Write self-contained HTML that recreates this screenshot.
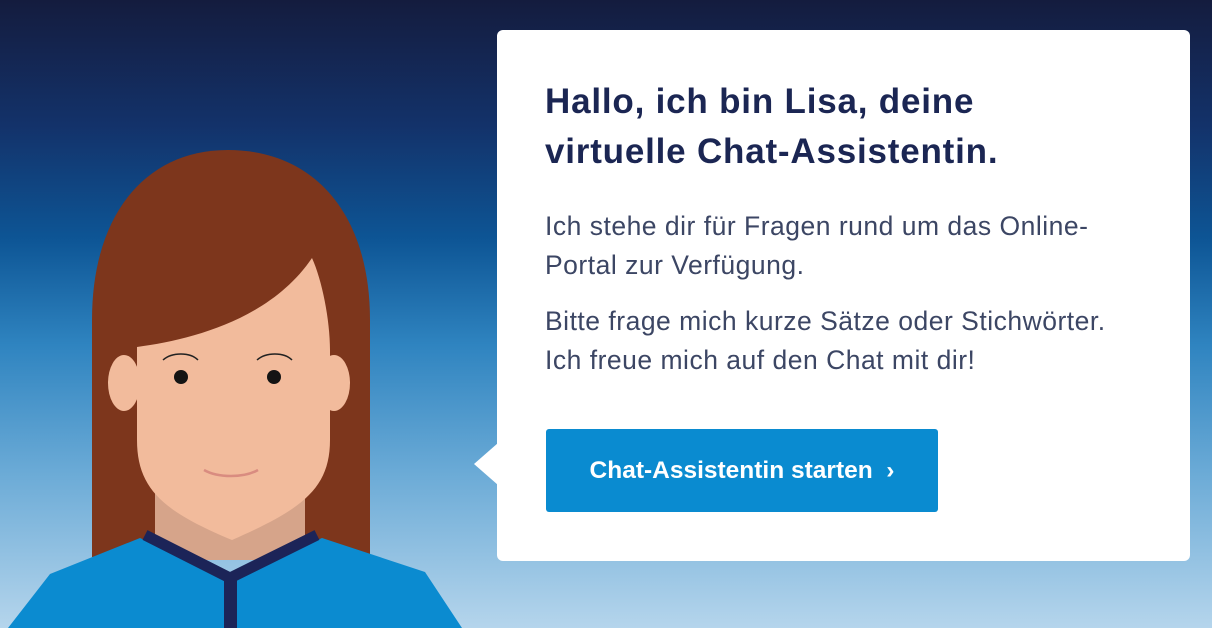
<!DOCTYPE html>
<html><head><meta charset="utf-8"><style>
html,body{margin:0;padding:0}
body{width:1212px;height:628px;overflow:hidden;position:relative;font-family:"Liberation Sans",sans-serif;
background:linear-gradient(180deg,#141c3e 0%,#13326a 20%,#0d5595 38%,#2f84c0 55%,#6aaad6 75%,#b5d5ec 100%);}
svg.p{position:absolute;left:0;top:0}
.card{position:absolute;left:497px;top:30px;width:693px;height:531px;background:#fff;border-radius:6px}
.ptr{position:absolute;left:474px;top:443px;width:0;height:0;border-top:21px solid transparent;border-bottom:21px solid transparent;border-right:24px solid #fff}
h1{position:absolute;left:545px;top:77px;margin:0;font-size:35px;letter-spacing:0.8px;line-height:50px;font-weight:bold;color:#1b2653;white-space:nowrap}
.t{position:absolute;left:545px;margin:0;font-size:26.5px;letter-spacing:0.5px;line-height:39px;color:#3c4664;white-space:nowrap}
.btn{position:absolute;left:546px;top:429px;width:392px;height:83px;background:#0a8bd0;border-radius:3px;color:#fff;font-weight:bold;font-size:24.5px;line-height:83px;text-align:center}
</style></head><body>
<svg class="p" width="1212" height="628" viewBox="0 0 1212 628">
<path d="M92,557 L92,320 C92,215 145,150 228,150 C315,150 370,215 370,320 L370,557 Z" fill="#7d361c"/>
<ellipse cx="124" cy="383" rx="16" ry="28" fill="#f2bb9c"/>
<ellipse cx="334" cy="383" rx="16" ry="28" fill="#f2bb9c"/>
<path d="M155,460 L305,460 L305,560 L155,560 Z" fill="#d6a48a"/>
<path d="M137,347 C190,340 270,320 312,258 C322,280 330,320 330,350 L330,440 C330,490 300,510 232,540 C165,512 137,490 137,440 Z" fill="#f2bb9c"/>
<path d="M163,360 C172,352 190,352 198,360" stroke="#222" stroke-width="1.5" fill="none"/>
<path d="M257,360 C266,352 284,352 292,360" stroke="#222" stroke-width="1.5" fill="none"/>
<circle cx="181" cy="377" r="7" fill="#141414"/>
<circle cx="274" cy="377" r="7" fill="#141414"/>
<path d="M204,470 C218,478 244,478 258,470" stroke="#d98c80" stroke-width="2.5" fill="none"/>
<path d="M140,538 L230,578 L322,538 L425,572 L462,628 L8,628 L50,574 Z" fill="#0b8bd0"/>
<path d="M145,535 L230,578 L317,535" stroke="#1c2458" stroke-width="11" fill="none"/>
<rect x="224" y="578" width="13" height="50" fill="#1c2458"/>
</svg>
<div class="ptr"></div>
<div class="card"></div>
<h1>Hallo, ich bin Lisa, deine<br>virtuelle Chat-Assistentin.</h1>
<p class="t" style="top:207px">Ich stehe dir für Fragen rund um das Online-<br>Portal zur Verfügung.</p>
<p class="t" style="top:302px">Bitte frage mich kurze Sätze oder Stichwörter.<br>Ich freue mich auf den Chat mit dir!</p>
<div class="btn">Chat-Assistentin starten &nbsp;›</div>
</body></html>
